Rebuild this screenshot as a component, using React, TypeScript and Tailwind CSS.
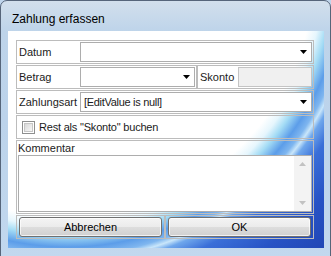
import React from "react";

const Arrow = ({ color = "#000" }: { color?: string }) => (
  <svg width="7" height="4" viewBox="0 0 7 4" className="block">
    <polygon points="0,0 7,0 3.5,4" fill={color} />
  </svg>
);

const UpArrow = ({ color = "#c2c2c2" }: { color?: string }) => (
  <svg width="7" height="4" viewBox="0 0 7 4" className="block">
    <polygon points="0,4 7,4 3.5,0" fill={color} />
  </svg>
);

const Swoosh = () => (
  <svg
    width="316"
    height="217"
    viewBox="0 0 316 217"
    className="absolute inset-0 block"
  >
    <defs>
      <radialGradient id="sw" gradientUnits="userSpaceOnUse" cx="60" cy="-60" r="400">
        <stop offset="0" stopColor="#ffffff" />
        <stop offset="0.615" stopColor="#ffffff" />
        <stop offset="0.64" stopColor="#e6f6fd" />
        <stop offset="0.662" stopColor="#a4dcf5" />
        <stop offset="0.69" stopColor="#5c9de9" />
        <stop offset="0.71" stopColor="#7fb6ef" />
        <stop offset="0.722" stopColor="#c9e6fa" />
        <stop offset="0.735" stopColor="#6fa7ec" />
        <stop offset="0.77" stopColor="#3a6fd8" />
        <stop offset="0.85" stopColor="#2753c5" />
        <stop offset="1" stopColor="#1c3fab" />
      </radialGradient>
    </defs>
    <rect x="0" y="0" width="316" height="217" fill="url(#sw)" />
  </svg>
);

const btn =
  "w-full h-full rounded-[3px] border border-[#707070] bg-[linear-gradient(180deg,#f4f4f4_0%,#ebebeb_50%,#dddddd_51%,#d0d0d0_100%)] shadow-[inset_0_0_0_1px_rgba(255,255,255,0.7)] text-[11px] text-black flex items-center justify-center";

export default function App() {
  return (
    <div
      className="w-[331px] h-[256px] overflow-hidden bg-[#bfd5ec]"
      style={{ fontFamily: '"Liberation Sans", Arial, sans-serif' }}
    >
      <div className="w-[331px] h-[262px] rounded-t-[7px] border border-[#56657a] bg-[linear-gradient(180deg,#d2dfec_0px,#bed4ea_30px,#bcd3eb_120px,#c2d8ee_260px)] flex flex-col">
        {/* Title bar */}
        <div className="h-[30px] shrink-0 flex items-center pl-[11px] pt-[6px] text-[12px] text-black">
          Zahlung erfassen
        </div>
        {/* Client area */}
        <div className="relative ml-[7px] w-[316px] h-[217px] shrink-0">
          <Swoosh />
          <div className="relative pl-[8px] pt-[9px]">
            <div className="w-[298px] flex flex-col gap-[1px] text-[11px] text-[#1b1b1b]">
              {/* Datum */}
              <div className="h-[24px] flex border border-[#bcbcbc] p-[1px]">
                <div className="w-[62px] flex items-center pl-[1px]">Datum</div>
                <div className="flex-1 border border-[#adadad] bg-white flex items-center justify-end pr-[4px]">
                  <Arrow />
                </div>
              </div>
              {/* Betrag / Skonto */}
              <div className="h-[24px] flex">
                <div className="w-[181px] flex border border-[#bcbcbc] p-[1px]">
                  <div className="w-[62px] flex items-center pl-[1px]">Betrag</div>
                  <div className="flex-1 border border-[#adadad] bg-white flex items-center justify-end pr-[4px]">
                    <Arrow />
                  </div>
                </div>
                <div className="flex-1 flex border border-[#bcbcbc] p-[1px]">
                  <div className="w-[39px] flex items-center pl-[1px]">Skonto</div>
                  <div className="flex-1 border border-[#c4c4c4] bg-[#f0f0f0]" />
                </div>
              </div>
              {/* Zahlungsart */}
              <div className="h-[24px] flex border border-[#bcbcbc] p-[1px]">
                <div className="w-[62px] flex items-center pl-[1px]">Zahlungsart</div>
                <div className="flex-1 border border-[#adadad] bg-white flex items-center justify-between pl-[3px] pr-[4px]">
                  <span className="tracking-[-0.3px]">[EditValue is null]</span>
                  <Arrow />
                </div>
              </div>
              {/* Checkbox */}
              <div className="h-[24px] flex items-center border border-[#bcbcbc] pl-[5px]">
                <div className="w-[13px] h-[13px] border border-[#8e8f8f] bg-white p-[1px]">
                  <div className="w-full h-full border border-[#c6c6c6] bg-[linear-gradient(135deg,#d9d9d9,#f7f7f7)]" />
                </div>
                <span className="ml-[4px] tracking-[-0.2px]">Rest als "Skonto" buchen</span>
              </div>
              {/* Kommentar */}
              <div className="h-[74px] flex flex-col border border-[#bcbcbc] p-[1px]">
                <div className="h-[13px] flex items-center leading-none">Kommentar</div>
                <div className="flex-1 border border-[#adadad] bg-white flex justify-end">
                  <div className="w-[17px] h-full bg-[#f3f3f3] flex flex-col justify-between items-center py-[6px]">
                    <UpArrow />
                    <Arrow color="#c2c2c2" />
                  </div>
                </div>
              </div>
              {/* Buttons */}
              <div className="h-[24px] flex">
                <div className="flex-1 border border-[#bcbcbc] px-[2px] py-[1px]">
                  <button className={btn}>Abbrechen</button>
                </div>
                <div className="flex-1 border border-[#bcbcbc] px-[2px] py-[1px]">
                  <button className={btn}>OK</button>
                </div>
              </div>
            </div>
          </div>
        </div>
      </div>
    </div>
  );
}
